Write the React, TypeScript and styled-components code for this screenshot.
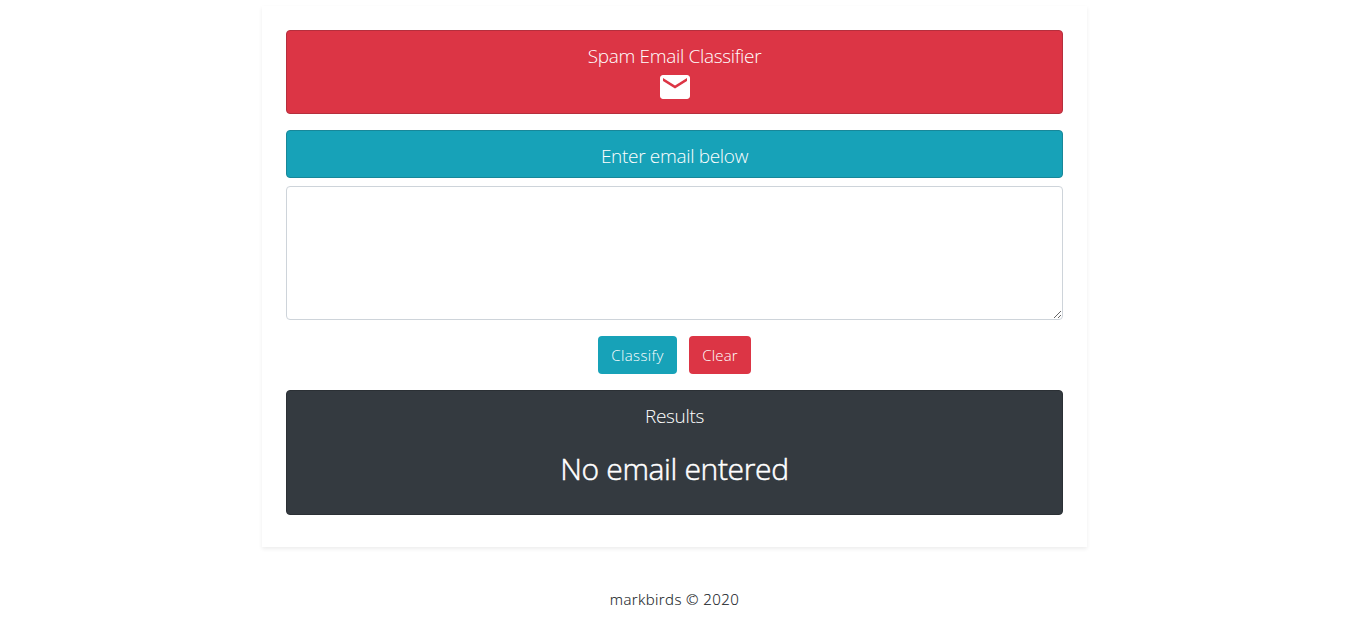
import React, { useState } from "react";
import styled, { createGlobalStyle } from "styled-components";
import { MdEmail } from "react-icons/md";

const GlobalStyle = createGlobalStyle`
  *, *::before, *::after { box-sizing: border-box; }
  body {
    margin: 0;
    overflow: hidden;
    background: #fff;
    color: #212529;
    font-family: "Segoe UI", "Open Sans", "Noto Sans", sans-serif;
    font-size: 16px;
    font-weight: 300;
    line-height: 1.5;
  }
`;

const Page = styled.div`
  display: flex;
  flex-direction: column;
  align-items: center;
  padding: 6px 0 0 2px;
`;

const Card = styled.main`
  width: 825px;
  height: 541px;
  padding: 24px;
  background: #fff;
  box-shadow: 0 2px 4px rgba(0, 0, 0, 0.075);
`;

const tones = {
  danger: { fill: "#dc3545", edge: "#b52f3d" },
  info: { fill: "#17a2b8", edge: "#188799" },
  dark: { fill: "#343a40", edge: "#2b3035" },
};

type Tone = keyof typeof tones;

const Panel = styled.section<{ $tone: Tone; $height: number; $gap: number }>`
  display: flex;
  flex-direction: column;
  align-items: center;
  height: ${(p) => p.$height}px;
  margin-bottom: ${(p) => p.$gap}px;
  padding-top: 12px;
  color: #fff;
  background: ${(p) => tones[p.$tone].fill};
  border: 1px solid ${(p) => tones[p.$tone].edge};
  border-radius: 4px;
`;

const Heading = styled.h5`
  margin: 0;
  font-size: 19px;
  font-weight: 300;
  line-height: 26px;
  letter-spacing: -0.32px;
`;

const MailIcon = styled(MdEmail)`
  display: block;
  flex: none;
  width: 36px;
  height: 36px;
`;

const EmailInput = styled.textarea`
  display: block;
  width: 100%;
  height: 134px;
  padding: 6px 12px;
  color: #495057;
  font: inherit;
  background: #fff;
  border: 1px solid #ced4da;
  border-radius: 4px;
  outline: none;
  resize: vertical;
`;

const Actions = styled.div`
  display: flex;
  justify-content: center;
  gap: 12px;
  margin: 16px 0;
`;

const Button = styled.button<{ $tone: Tone; $width: number; $spacing: number }>`
  width: ${(p) => p.$width}px;
  height: 38px;
  padding: 0;
  color: #fff;
  font: inherit;
  font-size: 15px;
  letter-spacing: ${(p) => p.$spacing}px;
  background: ${(p) => tones[p.$tone].fill};
  border: 0;
  border-radius: 4px;
  cursor: pointer;
`;

const Verdict = styled.h2`
  margin: 20px 0 0;
  font-size: 30px;
  font-weight: 300;
  line-height: 40px;
  letter-spacing: -0.35px;
  -webkit-text-stroke: 0.5px currentColor;
`;

const Footer = styled.footer`
  margin-top: 40px;
  font-size: 15px;
  line-height: 24px;
  letter-spacing: 0.4px;
  -webkit-text-stroke: 0.15px currentColor;
`;

export default function App() {
  const [email, setEmail] = useState("");

  return (
    <>
      <GlobalStyle />
      <Page>
        <Card>
          <Panel $tone="danger" $height={84} $gap={16}>
            <Heading>Spam Email Classifier</Heading>
            <MailIcon />
          </Panel>
          <Panel $tone="info" $height={48} $gap={8}>
            <Heading>Enter email below</Heading>
          </Panel>
          <EmailInput
            aria-label="Email"
            value={email}
            onChange={(e) => setEmail(e.target.value)}
          />
          <Actions>
            <Button $tone="info" $width={79} $spacing={0.4}>Classify</Button>
            <Button $tone="danger" $width={62} $spacing={0.2} onClick={() => setEmail("")}>
              Clear
            </Button>
          </Actions>
          <Panel $tone="dark" $height={125} $gap={0}>
            <Heading>Results</Heading>
            <Verdict>No email entered</Verdict>
          </Panel>
        </Card>
        <Footer>markbirds © 2020</Footer>
      </Page>
    </>
  );
}
